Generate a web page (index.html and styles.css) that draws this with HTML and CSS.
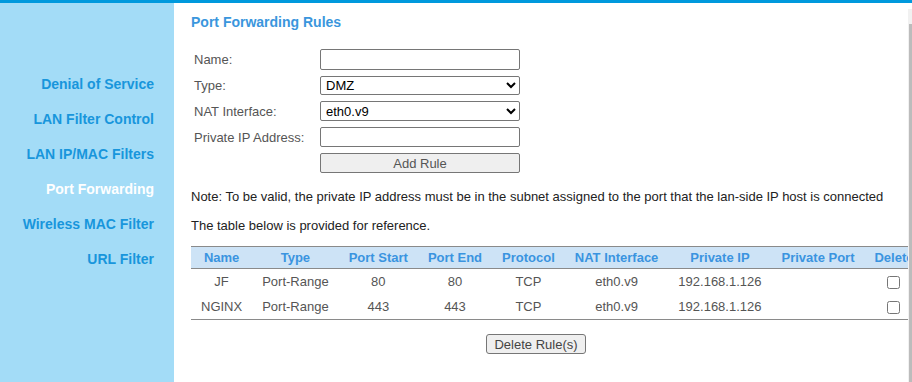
FILE: index.html
```html
<!DOCTYPE html>
<html>
<head>
<meta charset="utf-8">
<link rel="stylesheet" href="styles.css">
</head>
<body>
<div class="topbar"></div>
<div class="layout">
  <nav class="sidebar">
    <a class="nav-item">Denial of Service</a>
    <a class="nav-item">LAN Filter Control</a>
    <a class="nav-item">LAN IP/MAC Filters</a>
    <a class="nav-item active">Port Forwarding</a>
    <a class="nav-item">Wireless MAC Filter</a>
    <a class="nav-item">URL Filter</a>
  </nav>
  <main class="main">
    <h1 class="title">Port Forwarding Rules</h1>
    <div class="form">
      <label class="label">Name:</label>
      <input class="field h21" type="text">
      <label class="label">Type:</label>
      <select class="field sel h19"><option>DMZ</option></select>
      <label class="label">NAT Interface:</label>
      <select class="field sel h20"><option>eth0.v9</option></select>
      <label class="label">Private IP Address:</label>
      <input class="field h20" type="text">
      <span></span>
      <button class="btn add">Add Rule</button>
    </div>
    <p class="note">Note: To be valid, the private IP address must be in the subnet assigned to the port that the lan-side IP host is connected</p>
    <p class="note second">The table below is provided for reference.</p>
    <table class="rules">
      <thead>
        <tr><th>Name</th><th>Type</th><th>Port Start</th><th>Port End</th><th>Protocol</th><th>NAT Interface</th><th>Private IP</th><th>Private Port</th><th>Delete</th></tr>
      </thead>
      <tbody>
        <tr><td>JF</td><td>Port-Range</td><td>80</td><td>80</td><td>TCP</td><td>eth0.v9</td><td>192.168.1.126</td><td></td><td><input type="checkbox" class="chk"></td></tr>
        <tr><td>NGINX</td><td>Port-Range</td><td>443</td><td>443</td><td>TCP</td><td>eth0.v9</td><td>192.168.1.126</td><td></td><td><input type="checkbox" class="chk"></td></tr>
      </tbody>
    </table>
    <div class="actions"><button class="btn del">Delete Rule(s)</button></div>
  </main>
  <div class="scrollbar"><div class="thumb"></div></div>
</div>
</body>
</html>
```
FILE: styles.css
```css
html, body {
  margin: 0;
  padding: 0;
  background: #fff;
  font-family: "Liberation Sans", Arial, sans-serif;
  overflow: hidden;
}
.topbar {
  height: 3px;
  background: #0099dd;
}
.layout {
  display: flex;
  height: 379px;
}
.sidebar {
  width: 174px;
  flex: none;
  background: #a3dcf7;
  padding-top: 64px;
  box-sizing: border-box;
  display: flex;
  flex-direction: column;
}
.nav-item {
  display: block;
  height: 35px;
  line-height: 35px;
  text-align: right;
  padding-right: 20px;
  font-size: 14px;
  font-weight: bold;
  color: #1896dc;
}
.nav-item.active {
  color: #fff;
}
.main {
  flex: 1;
  min-width: 0;
  overflow: hidden;
  padding-left: 17px;
}
.scrollbar {
  width: 4px;
  flex: none;
  margin-top: 6px;
  background: #f1f1f1;
  display: flex;
  flex-direction: column;
}
.thumb {
  margin-top: 15px;
  margin-left: 1px;
  flex: 1;
  background: #bcbcbc;
}
.title {
  margin: 11px 0 0;
  font-size: 14px;
  line-height: 16px;
  font-weight: bold;
  color: #3a96dd;
}
.form {
  margin: 19px 0 0 3px;
  display: grid;
  grid-template-columns: 126px 200px;
  row-gap: 6px;
  align-items: center;
}
.label {
  font-size: 13px;
  color: #555;
}
.field {
  box-sizing: border-box;
  width: 200px;
  margin: 0;
  border: 1px solid #767676;
  border-radius: 2px;
  font-family: "Liberation Sans", Arial, sans-serif;
  font-size: 13px;
  background: #fff;
  color: #000;
  padding: 0 2px;
}
.h21 { height: 21px; }
.h20 { height: 20px; }
.h19 { height: 19px; }
.sel {
  padding: 0 0 0 1px;
}
.btn {
  box-sizing: border-box;
  height: 20px;
  margin: 0;
  padding: 0 6px;
  border: 1px solid #767676;
  border-radius: 2px;
  background: #efefef;
  font-family: "Liberation Sans", Arial, sans-serif;
  font-size: 13px;
  color: #555;
}
.add {
  width: 200px;
}
.note {
  margin: 16px 0 0;
  font-size: 13px;
  line-height: 16px;
  color: #222;
  white-space: nowrap;
}
.note.second {
  margin-top: 13px;
}
.rules {
  margin-top: 12px;
  border-collapse: collapse;
  font-size: 13px;
  white-space: nowrap;
}
.rules thead tr {
  background: #cde3f6;
  border-top: 1px solid #8a8a8a;
  border-bottom: 1px solid #8a8a8a;
}
.rules th {
  height: 21px;
  padding: 0 10px;
  color: #3a94e0;
  font-weight: bold;
  text-align: center;
}
.rules td {
  height: 25px;
  padding: 0 10px;
  color: #555;
  text-align: center;
}
.rules tbody tr:last-child {
  border-bottom: 1px solid #8a8a8a;
}
.chk {
  width: 13px;
  height: 13px;
  margin: 0 0 0 -2px;
  vertical-align: middle;
}
.actions {
  width: 690px;
  margin-top: 14px;
  text-align: center;
}
.del {
  width: 100px;
  border-radius: 3px;
  color: #444;
}
```
